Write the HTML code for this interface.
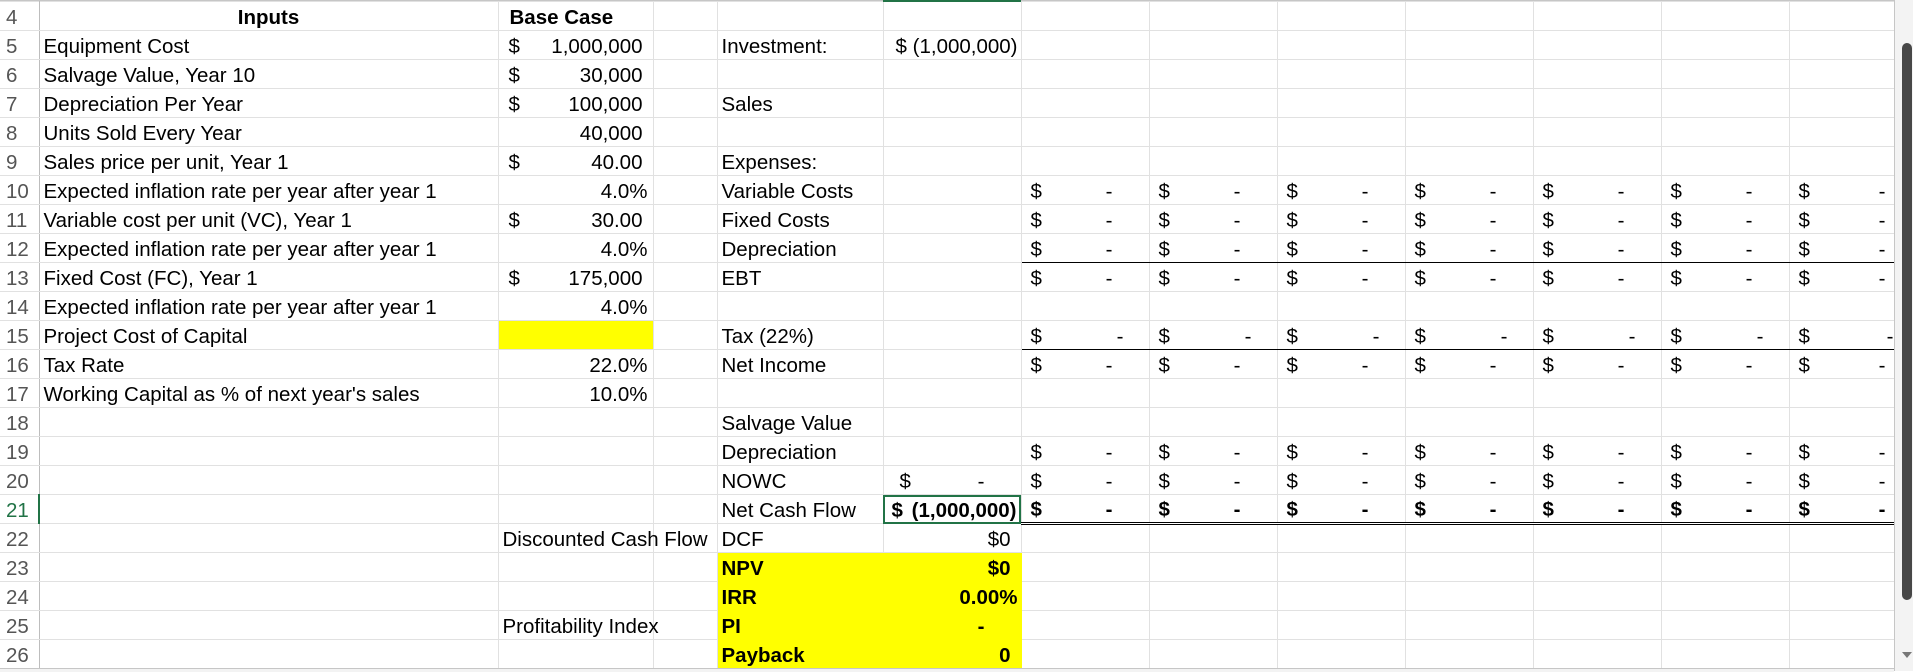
<!DOCTYPE html>
<html><head><meta charset="utf-8"><style>
body{margin:0;width:1913px;height:671px;overflow:hidden;background:#fff;font-family:"Liberation Sans",sans-serif;font-size:20.5px;color:#000;position:relative}
table{position:absolute;left:0;top:1px;border-collapse:collapse;table-layout:fixed;width:1894px}
tr{height:29px}
td{border:1px solid #e1e1e1;padding:0 4px 0 4px;white-space:nowrap;overflow:visible;vertical-align:bottom;line-height:24px}
td.h{color:#555;padding-left:6px;border-right:1px solid #bdbdbd;border-left:none}
.r{text-align:right;padding-right:5px}
.d{float:left}
td.a{text-align:right;padding-left:9px;padding-right:36px}
td.a.t{padding-right:25px}
td.a.l{padding-right:8px}
td.a.t.l{padding-right:0}
td.n{text-align:right;padding-left:10px;padding-right:10px}
.y{background:#ffff00}
.b{font-weight:bold}
.c{text-align:center}
.u td.a{border-bottom:1px solid #000}
.w td.a{border-bottom:3px double #000}
.sel{outline:2px solid #217346;outline-offset:-2px}
</style></head><body>
<div style="position:absolute;left:0;top:0;width:1894px;height:1px;background:#c6c6c6"></div>
<table>
<colgroup><col style="width:39px"><col style="width:459px"><col style="width:155px"><col style="width:64px"><col style="width:166px"><col style="width:138px"><col style="width:128px"><col style="width:128px"><col style="width:128px"><col style="width:128px"><col style="width:128px"><col style="width:128px"><col style="width:105px"></colgroup>
<tr><td class="h">4</td><td class="c b">Inputs</td><td class="b" style="padding-left:11px">Base Case</td><td></td><td></td><td></td><td></td><td></td><td></td><td></td><td></td><td></td><td></td></tr>
<tr><td class="h">5</td><td>Equipment Cost</td><td class="n"><span class="d">$</span>1,000,000</td><td></td><td>Investment:</td><td class="n" style="padding-left:12px;padding-right:3px"><span class="d">$</span>(1,000,000)</td><td></td><td></td><td></td><td></td><td></td><td></td><td></td></tr>
<tr><td class="h">6</td><td>Salvage Value, Year 10</td><td class="n"><span class="d">$</span>30,000</td><td></td><td></td><td></td><td></td><td></td><td></td><td></td><td></td><td></td><td></td></tr>
<tr><td class="h">7</td><td>Depreciation Per Year</td><td class="n"><span class="d">$</span>100,000</td><td></td><td>Sales</td><td></td><td></td><td></td><td></td><td></td><td></td><td></td><td></td></tr>
<tr><td class="h">8</td><td>Units Sold Every Year</td><td class="n">40,000</td><td></td><td></td><td></td><td></td><td></td><td></td><td></td><td></td><td></td><td></td></tr>
<tr><td class="h">9</td><td>Sales price per unit, Year 1</td><td class="n"><span class="d">$</span>40.00</td><td></td><td>Expenses:</td><td></td><td></td><td></td><td></td><td></td><td></td><td></td><td></td></tr>
<tr><td class="h">10</td><td>Expected inflation rate per year after year 1</td><td class="r">4.0%</td><td></td><td>Variable Costs</td><td></td><td class="a"><span class="d">$</span>-</td><td class="a"><span class="d">$</span>-</td><td class="a"><span class="d">$</span>-</td><td class="a"><span class="d">$</span>-</td><td class="a"><span class="d">$</span>-</td><td class="a"><span class="d">$</span>-</td><td class="a l"><span class="d">$</span>-</td></tr>
<tr><td class="h">11</td><td>Variable cost per unit (VC), Year 1</td><td class="n"><span class="d">$</span>30.00</td><td></td><td>Fixed Costs</td><td></td><td class="a"><span class="d">$</span>-</td><td class="a"><span class="d">$</span>-</td><td class="a"><span class="d">$</span>-</td><td class="a"><span class="d">$</span>-</td><td class="a"><span class="d">$</span>-</td><td class="a"><span class="d">$</span>-</td><td class="a l"><span class="d">$</span>-</td></tr>
<tr class="u"><td class="h">12</td><td>Expected inflation rate per year after year 1</td><td class="r">4.0%</td><td></td><td>Depreciation</td><td></td><td class="a"><span class="d">$</span>-</td><td class="a"><span class="d">$</span>-</td><td class="a"><span class="d">$</span>-</td><td class="a"><span class="d">$</span>-</td><td class="a"><span class="d">$</span>-</td><td class="a"><span class="d">$</span>-</td><td class="a l"><span class="d">$</span>-</td></tr>
<tr><td class="h">13</td><td>Fixed Cost (FC), Year 1</td><td class="n"><span class="d">$</span>175,000</td><td></td><td>EBT</td><td></td><td class="a"><span class="d">$</span>-</td><td class="a"><span class="d">$</span>-</td><td class="a"><span class="d">$</span>-</td><td class="a"><span class="d">$</span>-</td><td class="a"><span class="d">$</span>-</td><td class="a"><span class="d">$</span>-</td><td class="a l"><span class="d">$</span>-</td></tr>
<tr><td class="h">14</td><td>Expected inflation rate per year after year 1</td><td class="r">4.0%</td><td></td><td></td><td></td><td></td><td></td><td></td><td></td><td></td><td></td><td></td></tr>
<tr class="u"><td class="h">15</td><td>Project Cost of Capital</td><td class="y"></td><td></td><td>Tax (22%)</td><td></td><td class="a t"><span class="d">$</span>-</td><td class="a t"><span class="d">$</span>-</td><td class="a t"><span class="d">$</span>-</td><td class="a t"><span class="d">$</span>-</td><td class="a t"><span class="d">$</span>-</td><td class="a t"><span class="d">$</span>-</td><td class="a t l"><span class="d">$</span>-</td></tr>
<tr><td class="h">16</td><td>Tax Rate</td><td class="r">22.0%</td><td></td><td>Net Income</td><td></td><td class="a"><span class="d">$</span>-</td><td class="a"><span class="d">$</span>-</td><td class="a"><span class="d">$</span>-</td><td class="a"><span class="d">$</span>-</td><td class="a"><span class="d">$</span>-</td><td class="a"><span class="d">$</span>-</td><td class="a l"><span class="d">$</span>-</td></tr>
<tr><td class="h">17</td><td>Working Capital as % of next year's sales</td><td class="r">10.0%</td><td></td><td></td><td></td><td></td><td></td><td></td><td></td><td></td><td></td><td></td></tr>
<tr><td class="h">18</td><td></td><td></td><td></td><td>Salvage Value</td><td></td><td></td><td></td><td></td><td></td><td></td><td></td><td></td></tr>
<tr><td class="h">19</td><td></td><td></td><td></td><td>Depreciation</td><td></td><td class="a"><span class="d">$</span>-</td><td class="a"><span class="d">$</span>-</td><td class="a"><span class="d">$</span>-</td><td class="a"><span class="d">$</span>-</td><td class="a"><span class="d">$</span>-</td><td class="a"><span class="d">$</span>-</td><td class="a l"><span class="d">$</span>-</td></tr>
<tr><td class="h">20</td><td></td><td></td><td></td><td>NOWC</td><td class="a" style="padding-left:16px"><span class="d">$</span>-</td><td class="a"><span class="d">$</span>-</td><td class="a"><span class="d">$</span>-</td><td class="a"><span class="d">$</span>-</td><td class="a"><span class="d">$</span>-</td><td class="a"><span class="d">$</span>-</td><td class="a"><span class="d">$</span>-</td><td class="a l"><span class="d">$</span>-</td></tr>
<tr class="w"><td class="h" style="color:#217346;border-right:2px solid #217346">21</td><td></td><td></td><td></td><td>Net Cash Flow</td><td class="n sel b" style="border-bottom:1px solid #e1e1e1;padding-left:8px;padding-right:4px"><span class="d">$</span>(1,000,000)</td><td class="a b"><span class="d">$</span>-</td><td class="a b"><span class="d">$</span>-</td><td class="a b"><span class="d">$</span>-</td><td class="a b"><span class="d">$</span>-</td><td class="a b"><span class="d">$</span>-</td><td class="a b"><span class="d">$</span>-</td><td class="a b l"><span class="d">$</span>-</td></tr>
<tr><td class="h">22</td><td></td><td>Discounted Cash Flow</td><td></td><td>DCF</td><td class="r" style="padding-right:10px">$0</td><td></td><td></td><td></td><td></td><td></td><td></td><td></td></tr>
<tr><td class="h">23</td><td></td><td></td><td></td><td class="y b" style="border-color:#ffff00">NPV</td><td class="y b r" style="padding-right:10px;border-color:#ffff00">$0</td><td></td><td></td><td></td><td></td><td></td><td></td><td></td></tr>
<tr><td class="h">24</td><td></td><td></td><td></td><td class="y b" style="border-color:#ffff00">IRR</td><td class="y b r" style="padding-right:3px;border-color:#ffff00">0.00%</td><td></td><td></td><td></td><td></td><td></td><td></td><td></td></tr>
<tr><td class="h">25</td><td></td><td>Profitability Index</td><td></td><td class="y b" style="border-color:#ffff00">PI</td><td class="y b r" style="padding-right:36px;border-color:#ffff00">-</td><td></td><td></td><td></td><td></td><td></td><td></td><td></td></tr>
<tr><td class="h">26</td><td></td><td></td><td></td><td class="y b" style="border-color:#ffff00">Payback</td><td class="y b r" style="padding-right:10px;border-color:#ffff00">0</td><td></td><td></td><td></td><td></td><td></td><td></td><td></td></tr>
</table>
<div style="position:absolute;left:883px;top:0;width:138px;height:2px;background:#217346"></div>
<div style="position:absolute;left:1894px;top:0;width:19px;height:671px;background:#f3f3f3;border-left:1px solid #c6c6c6"></div>
<div style="position:absolute;left:1902px;top:43px;width:10px;height:557px;background:#474747;border-radius:5px"></div>
<div style="position:absolute;left:1902px;top:652px;width:0;height:0;border-left:5px solid transparent;border-right:5px solid transparent;border-top:6px solid #777"></div>
<div style="position:absolute;left:0;top:668px;width:1894px;height:3px;background:#f3f3f3;border-top:1px solid #c6c6c6"></div>
</body></html>
